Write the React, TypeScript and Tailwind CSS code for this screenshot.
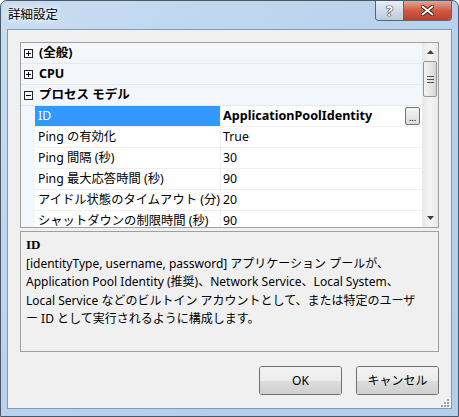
import React from 'react'

const ui = "font-['Noto_Sans','Noto_Sans_CJK_JP',sans-serif]"

interface Prop {
  name:      string
  value:     string
  selected?: boolean
}

const props: Prop[] = [
  { name: 'ID', value: 'ApplicationPoolIdentity', selected: true },
  { name: 'Ping の有効化', value: 'True' },
  { name: 'Ping 間隔 (秒)', value: '30' },
  { name: 'Ping 最大応答時間 (秒)', value: '90' },
  { name: 'アイドル状態のタイムアウト (分)', value: '20' },
  { name: 'シャットダウンの制限時間 (秒)', value: '90' },
]

function ExpandBox({ open = false }: { open?: boolean }) {
  return (
    <svg width="9" height="9" viewBox="0 0 9 9" className="shrink-0">
      <rect x="0.5" y="0.5" width="8" height="8" fill="#fff" stroke="#222" />
      <path d="M2 4.5h5" stroke="#000" />
      {!open && <path d="M4.5 2v5" stroke="#000" />}
    </svg>
  )
}

function Category({ label, open = false }: { label: string; open?: boolean }) {
  return (
    <div className="flex h-[21px] shrink-0 items-center gap-[6px] border-b border-[#e6eaf0] bg-[#f3f6fb] pl-[3px] text-[12.5px] font-bold">
      <ExpandBox open={open} />
      <span>{label}</span>
    </div>
  )
}

function Row({ name, value, selected }: Prop) {
  return (
    <div className="flex h-[21px] shrink-0 text-[12.3px]">
      <div className="w-[14px] shrink-0 bg-[#f3f6fb]" />
      <div
        className={
          selected
            ? 'flex w-[186px] shrink-0 items-center overflow-hidden whitespace-nowrap border-b border-r border-[#f0f0f0] bg-[#3399ff] pl-[3px] text-white'
            : 'flex w-[186px] shrink-0 items-center overflow-hidden whitespace-nowrap border-b border-r border-[#f0f0f0] bg-white pl-[3px]'
        }
      >
        {name}
      </div>
      <div className="flex flex-1 items-center justify-between border-b border-[#f0f0f0] bg-white pl-[2px] pr-[2px]">
        <span className={selected ? 'text-[12.6px] font-bold' : ''}>{value}</span>
        {selected && (
          <span className="flex h-[18px] w-[15px] items-end justify-center rounded-[2px] border border-[#707070] bg-gradient-to-b from-[#f6f6f6] to-[#dcdcdc] pb-[2px] text-[9px] leading-none">
            ...
          </span>
        )}
      </div>
    </div>
  )
}

function Scrollbar() {
  return (
    <div className="flex w-[16px] shrink-0 flex-col bg-gradient-to-r from-[#e8e8e8] via-[#f4f4f4] to-[#e8e8e8]">
      <div className="flex h-[18px] shrink-0 items-center justify-center">
        <svg width="7" height="4" viewBox="0 0 7 4"><path d="M3.5 0L7 4H0z" fill="#404040" /></svg>
      </div>
      <div className="mx-[1px] flex h-[36px] shrink-0 flex-col items-center justify-center gap-[2px] rounded-[2px] border border-[#979797] bg-gradient-to-r from-[#f3f3f3] via-[#e6e6e6] to-[#d6d6d6]">
        <div className="h-px w-[7px] bg-[#555]" />
        <div className="h-px w-[7px] bg-[#555]" />
        <div className="h-px w-[7px] bg-[#555]" />
      </div>
      <div className="flex-1" />
      <div className="flex h-[18px] shrink-0 items-center justify-center">
        <svg width="7" height="4" viewBox="0 0 7 4"><path d="M0 0h7L3.5 4z" fill="#404040" /></svg>
      </div>
    </div>
  )
}

function Button({ children }: { children: React.ReactNode }) {
  return (
    <div className="relative flex h-[29px] w-[83px] items-center justify-center overflow-hidden rounded-[3px] border border-[#707070] text-[12px] shadow-[inset_0_0_0_1px_#fcfcfc]">
      <div className="absolute inset-0 flex flex-col">
        <div className="flex-1 bg-gradient-to-b from-[#f2f2f2] to-[#ebebeb]" />
        <div className="flex-1 bg-gradient-to-b from-[#dddddd] to-[#cfcfcf]" />
      </div>
      <span className="relative">{children}</span>
    </div>
  )
}

export default function App() {
  return (
    <div className={`${ui} flex h-[417px] w-[459px] flex-col overflow-hidden rounded-t-[7px] border border-[#4a5868] bg-gradient-to-br from-[#c9ddf1] via-[#b8d1ec] to-[#b3cdea] text-[12px] text-black`}>
      <div className="flex h-[28px] shrink-0 items-start justify-between">
        <span className="pl-[7px] pt-[5px] text-[12.5px] [text-shadow:0_0_6px_#fff,0_0_6px_#fff]">詳細設定</span>
        <div className="mr-[6px] flex h-[20px] overflow-hidden rounded-b-[4px] border border-t-0 border-[#58667a]">
          <div className="flex w-[27px] items-center justify-center bg-gradient-to-b from-[#e6eef8] to-[#bccbdc] text-[14px] font-bold leading-none text-white [text-shadow:0_0_1px_#222,0_0_1px_#222,0_0_1px_#222]">
            ?
          </div>
          <div className="w-px bg-[#58667a]" />
          <div className="flex w-[47px] items-center justify-center bg-gradient-to-b from-[#e8a493] via-[#d15a43] to-[#c0412b]">
            <svg width="13" height="11" viewBox="0 0 13 11">
              <path d="M1.5 1.5l10 8M11.5 1.5l-10 8" stroke="#3a1a14" strokeWidth="3.6" strokeLinecap="round" />
              <path d="M1.5 1.5l10 8M11.5 1.5l-10 8" stroke="#fff" strokeWidth="2" strokeLinecap="round" />
            </svg>
          </div>
        </div>
      </div>

      <div className="mx-[6px] mb-[7px] flex flex-1 flex-col border border-[#8499b4] bg-[#f0f0f0] px-[12px] pt-[12px]">
        <div className="flex h-[186px] shrink-0 border border-[#a0a0a0] bg-white">
          <div className="flex flex-1 flex-col overflow-hidden">
            <Category label="(全般)" />
            <Category label="CPU" />
            <Category label="プロセス モデル" open />
            {props.map(p => (
              <Row key={p.name} {...p} />
            ))}
          </div>
          <Scrollbar />
        </div>

        <div className="mt-[3px] flex h-[121px] shrink-0 flex-col border border-[#a0a0a0] px-[5px] pt-[4px] leading-[18.5px]">
          <span className="font-['Liberation_Serif','Noto_Sans_CJK_JP',serif] text-[13px] font-bold">ID</span>
          <span className="whitespace-nowrap">[identityType, username, password] アプリケーション プールが、</span>
          <span className="whitespace-nowrap">Application Pool Identity (推奨)、Network Service、Local System、</span>
          <span className="whitespace-nowrap">Local Service などのビルトイン アカウントとして、または特定のユーザ</span>
          <span className="whitespace-nowrap">ー ID として実行されるように構成します。</span>
        </div>

        <div className="mt-[14px] flex justify-end gap-[14px]">
          <Button>OK</Button>
          <Button>キャンセル</Button>
        </div>

        <div className="flex flex-1 items-end justify-end pb-[1px]">
          <svg width="8" height="8" viewBox="0 0 8 8" className="-mr-[10px]">
            <g fill="#a0a0a0">
              <rect x="6" y="0" width="2" height="2" />
              <rect x="3" y="3" width="2" height="2" />
              <rect x="6" y="3" width="2" height="2" />
              <rect x="0" y="6" width="2" height="2" />
              <rect x="3" y="6" width="2" height="2" />
              <rect x="6" y="6" width="2" height="2" />
            </g>
          </svg>
        </div>
      </div>
    </div>
  )
}
